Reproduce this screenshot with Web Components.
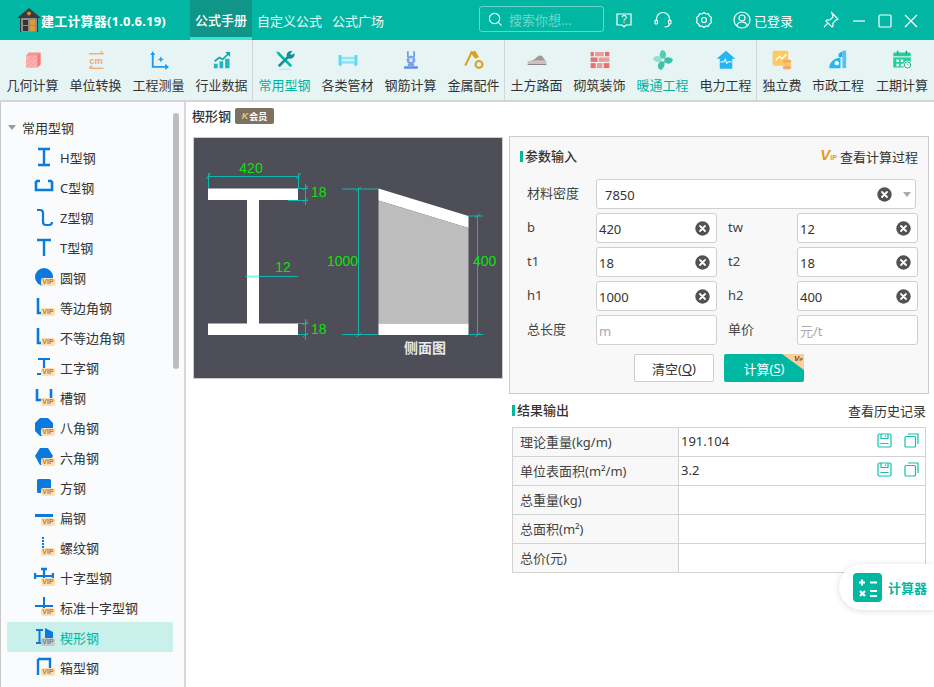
<!DOCTYPE html>
<html lang="zh">
<head>
<meta charset="utf-8">
<title>建工计算器</title>
<style>
html, body { margin: 0; height: 687px; overflow: hidden; background: #fff; }
body { font: 13px "Noto Sans", "Noto Sans CJK SC", sans-serif; color: #333; }
</style>
</head>
<body>
<calc-app></calc-app>
<script>
const FONT = '"Noto Sans", "Noto Sans CJK SC", sans-serif';

// toolbar icons, 32x32
const TOOL_ICONS = {
  cube: '<path d="M5 9l4-5h19v19l-5 5H5z" fill="#ff8f8f"/><path d="M5 9h18v19H5z" fill="#ffb0b0"/><path d="M6 27L22 11M12 28l11-11M6 20l10-10" stroke="#ff7c7c" stroke-width="1"/><path d="M23 9l5-5v19l-5 5z" fill="#f97a7a"/>',
  unit: '<path d="M5 6h23M23 2l5 4M5 29h23M5 29l5-4" stroke="#f5b07a" stroke-width="2.400" fill="none"/><text x="16" y="23" text-anchor="middle" font-size="15" font-weight="700" fill="#f5a968" font-family="Liberation Sans">cm</text>',
  axis: '<path d="M6 5v22h23" stroke="#1e9bf0" stroke-width="3" fill="none"/><path d="M2 8l4-6 4 6zM26 22l6 5-6 5z" fill="#1e9bf0"/><path d="M19 10l1.500 3.500 3.500 1.500-3.500 1.500-1.500 3.500-1.500-3.500-3.500-1.500 3.500-1.500z" fill="#1e9bf0"/>',
  chart: '<path d="M4 18l8-6 5 3 9-9" stroke="#10a8a0" stroke-width="2.600" fill="none"/><path d="M21 3h8v8z" fill="#10a8a0"/><path d="M3 22h6v7H3zM12 18h6v11h-6zM21 14h7v15h-7z" fill="#1fb5c4"/>',
  wrench: '<path d="M6 6l20 20" stroke="#00b8a2" stroke-width="4"/><path d="M25 7L6 26" stroke="#0f8f96" stroke-width="4"/><path d="M19 11a7 7 0 0 1 9-9l-4 4 2 2 5-3a7 7 0 0 1-10 8z" fill="#0f8f96"/><path d="M2 2l6 2-3 4z" fill="#00b8a2"/><ellipse cx="16" cy="31" rx="10" ry="1.500" fill="#bdeee7"/>',
  pipe: '<rect x="1" y="8" width="5" height="17" rx="1" fill="#5fd7f2"/><rect x="26" y="8" width="5" height="17" rx="1" fill="#5fd7f2"/><rect x="6" y="11" width="20" height="11" fill="#8ae6f7"/><rect x="6" y="15" width="20" height="2.500" fill="#d8f8fd"/>',
  rebar: '<path d="M11 2v9M21 2v9" stroke="#5c8ee6" stroke-width="2.400"/><circle cx="16" cy="16" r="7" fill="#7aa3ee"/><path d="M13.500 13h5v6h-5z" fill="#dfe9fb"/><path d="M5 26h22v4H5z" fill="#5c8ee6"/><path d="M11 22h10v4H11z" fill="#7aa3ee"/>',
  metal: '<path d="M13 2L2 25" stroke="#d8a31f" stroke-width="3.400"/><path d="M10 4l8-3 6 10-6 3z" fill="#d8a31f"/><circle cx="24" cy="23" r="5.500" fill="none" stroke="#d8a31f" stroke-width="3.400"/>',
  road: '<path d="M2 17c6 0 8-1 11-3 3-3 6-6 10-5 3 1 4 7 8 8z" fill="#a89797"/><rect x="1" y="18" width="30" height="3.500" fill="#ccbcbc"/><rect x="1" y="22" width="30" height="2" fill="#8f8484"/>',
  brick: '<g fill="#ea6f6f"><rect x="8" y="3" width="14" height="7" rx="1" fill="#f09a9a"/><rect x="24" y="3" width="7" height="7"/><rect x="1" y="3" width="5" height="7"/><rect x="1" y="12" width="11" height="7"/><rect x="14" y="12" width="17" height="7" fill="#f09a9a"/><rect x="1" y="21" width="8" height="8"/><rect x="11" y="21" width="9" height="8" fill="#f09a9a"/><rect x="22" y="21" width="9" height="8"/></g>',
  fan: '<path d="M14 15C9 10 10 3 15 0c6 1 8 9 3 14z" fill="#4fcdb5"/><path d="M18 14c5-4 11-3 14 2-2 7-10 8-15 2z" fill="#3fc1ab"/><path d="M18 18c2 6-1 12-6 14-6-3-6-11 2-15z" fill="#3fc1ab"/><path d="M14 18C9 21 3 19 0 14c3-6 11-6 15 0z" fill="#8fe0cd"/><circle cx="16" cy="16" r="2.400" fill="#fff"/>',
  house: '<path d="M16 1L1 14h5v15a1 1 0 0 0 1 1h18a1 1 0 0 0 1-1V14h5z" fill="#25b6f4"/><path d="M7 19h6l2-5 2 8 2-3h6" fill="none" stroke="#fff" stroke-width="1.600"/>',
  fee: '<rect x="1" y="1" width="25" height="24" rx="3" fill="#ffc95e"/><path d="M6 16l6-6 4 4 7-7" stroke="#fff" stroke-width="2.400" fill="none"/><ellipse cx="24" cy="18" rx="7" ry="3" fill="#f7ab5a"/><ellipse cx="24" cy="23" rx="7" ry="3" fill="#f9c47f"/><ellipse cx="24" cy="28" rx="7" ry="3" fill="#f7ab5a"/>',
  muni: '<path d="M23 1h6v28h-6z" fill="#55c2f7"/><path d="M17 6l6-4v9h-6z" fill="#25a8f0"/><path d="M2 29c0-8 6-16 18-17v17z" fill="#25b6f4"/><circle cx="14" cy="21" r="3.500" fill="#fff"/>',
  date: '<path d="M4 4h24a2 2 0 0 1 2 2v22H2V6a2 2 0 0 1 2-2z" fill="#21cf9c"/><path d="M9 1v6M23 1v6" stroke="#16ad80" stroke-width="2.400"/><path d="M2 11h28" stroke="#fff" stroke-width="1.600"/><path d="M7 15h4v4H7zM14 15h4v4h-4zM7 22h4v4H7zM14 22h4v4h-4z" fill="#fff"/><circle cx="25" cy="24" r="7" fill="#fff"/><circle cx="25" cy="24" r="5" fill="none" stroke="#16ad80" stroke-width="1.600"/><path d="M25 21v3h2.500" stroke="#16ad80" fill="none"/>'
};

// tree icons, 20x20, all in one blue
const TREE_ICONS = {
  h: '<path d="M4 2h12M10 2v16M4 18h12" stroke="#0a7ade" stroke-width="2.400" fill="none"/>',
  c: '<path d="M2 4v9h16V4" stroke="#0a7ade" stroke-width="2.600" fill="none"/><path d="M2 4h4M14 4h4" stroke="#0a7ade" stroke-width="2.600"/>',
  z: '<path d="M3 3h3c2 0 3 1 3 3v9c0 2 1 3 3 3h3c2 0 3-1 3-3" stroke="#0a7ade" stroke-width="2.200" fill="none"/>',
  t: '<path d="M3 3h14M10 3v16" stroke="#0a7ade" stroke-width="2.400" fill="none"/>',
  round: '<circle cx="10" cy="10" r="9" fill="#0a7ade"/>',
  eq: '<path d="M4 1v15h6" stroke="#0a7ade" stroke-width="2.600" fill="none"/>',
  i: '<path d="M4 2h12M10 2v14M3 17h4" stroke="#0a7ade" stroke-width="2.200" fill="none"/>',
  slot: '<path d="M3 2v11h14V2" stroke="#0a7ade" stroke-width="2.600" fill="none"/>',
  oct: '<path d="M6 1h8l5 5v8l-5 5H6l-5-5V6z" fill="#0a7ade"/>',
  hex: '<path d="M6 1h8l5 8-5 9H6l-5-9z" fill="#0a7ade"/>',
  sq: '<rect x="3" y="2" width="14" height="14" rx="1.500" fill="#0a7ade"/>',
  flat: '<rect x="1" y="7" width="18" height="3" fill="#0a7ade"/>',
  rib: '<path d="M9 0v16" stroke="#0a7ade" stroke-width="2" stroke-dasharray="2 1"/>',
  cross: '<path d="M10 2v16M1 9h18" stroke="#0a7ade" stroke-width="2.200"/><path d="M7 2h6M1 6v6M19 6v6" stroke="#0a7ade" stroke-width="2.400"/>',
  scross: '<path d="M10 0v18M1 9h18" stroke="#0a7ade" stroke-width="2"/>',
  wedge: '<path d="M2 3h7M5.500 3v13M2 16h7" stroke="#0a7ade" stroke-width="2" fill="none"/><path d="M11 1l8 4v12h-8z" fill="#0a7ade"/>',
  box: '<path d="M4 2h12v15M4 2v16" stroke="#0a7ade" stroke-width="2.400" fill="none"/>'
};

class ToolItem extends HTMLElement {
  constructor() {
    super();
    this.attachShadow({ mode: 'open' });
  }
  connectedCallback() {
    const on = this.hasAttribute('active');
    this.shadowRoot.innerHTML = `
      <style>
        :host { display: flex; flex-direction: column; align-items: center; width: 63px; flex: none; }
        svg { width: 20px; height: 20px; margin-top: 10px; }
        span { margin-top: 6px; font-size: 13px; line-height: 18px; white-space: nowrap; color: ${on ? '#00b19c' : '#333'}; }
      </style>
      <svg viewBox="0 0 32 32">${TOOL_ICONS[this.getAttribute('icon')]}</svg>
      <span><slot></slot></span>`;
  }
}

class TitleBar extends HTMLElement {
  constructor() {
    super();
    this.attachShadow({ mode: 'open' });
  }
  connectedCallback() {
    this.shadowRoot.innerHTML = `
      <style>
        :host { display: flex; align-items: stretch; height: 40px; background: #01b7a3; color: #fff; font-size: 13px; }
        .logo { display: flex; align-items: center; width: 190px; padding-left: 17px; box-sizing: border-box; }
        .logo svg { width: 24px; height: 26px; flex: none; }
        .logo b { font-size: 13px; white-space: nowrap; letter-spacing: .2px; }
        .tab { display: flex; align-items: center; color: #e6faf7; box-sizing: border-box; white-space: nowrap; }
        .tab.on { justify-content: center; background: #0f9688; border-bottom: 3px solid #2fe8d3; width: 62px; color: #fff; font-weight: 500; padding-top: 2px; }
        .tab.two { padding: 0 5px; }
        .tab.three { padding: 0 5px; }
        .search { display: flex; align-items: center; gap: 6px; width: 125px; height: 26px; margin: 6px 0 0 90px; box-sizing: border-box; border: 1px solid rgba(255,255,255,.4); border-radius: 3px; padding-left: 8px; color: rgba(255,255,255,.45); }
        .ico { display: flex; align-items: center; justify-content: center; }
        svg.i { width: 18px; height: 18px; fill: none; stroke: #fff; stroke-width: 1.200; }
        .user { display: flex; align-items: center; gap: 3px; white-space: nowrap; }
        .btns { display: flex; align-items: center; }
      </style>
      <div class="logo">
        <svg viewBox="0 0 24 26"><path d="M12 1L0 11h3v14h18V11h3z" fill="#3a3a3a"/><rect x="4" y="11" width="16" height="14" rx="1" fill="#8d8d8d"/><rect x="6" y="13" width="5" height="5" fill="#333"/><rect x="13" y="13" width="5" height="5" fill="#e09a3b"/><rect x="6" y="19" width="5" height="5" fill="#333"/><rect x="13" y="19" width="5" height="5" fill="#e09a3b"/><circle cx="12" cy="6.500" r="2" fill="#c98f2f"/></svg>
        <b>建工计算器(1.0.6.19)</b>
      </div>
      <div class="tab on">公式手册</div>
      <div class="tab two">自定义公式</div>
      <div class="tab three">公式广场</div>
      <div class="search">
        <svg class="i" style="width:15px;height:15px" viewBox="0 0 16 16"><circle cx="7" cy="7" r="5.500"/><path d="M11 11l3.500 3.500"/></svg>
        <span>搜索你想...</span>
      </div>
      <div class="ico" style="margin-left:11px">
        <svg class="i" viewBox="0 0 18 18"><path d="M2 3h14v11h-5l-2 2-2-2H2z"/><text x="9" y="12" text-anchor="middle" font-size="10" fill="#fff" stroke="none" font-family="Liberation Sans">?</text></svg>
      </div>
      <div class="ico" style="margin-left:21px">
        <svg class="i" viewBox="0 0 18 18"><path d="M2.500 10V8a6.500 6.500 0 0 1 13 0v2"/><rect x="1" y="9" width="2.500" height="4" rx="1"/><rect x="14.500" y="9" width="2.500" height="4" rx="1"/><path d="M15.500 13c0 2-2 3-5 3"/></svg>
      </div>
      <div class="ico" style="margin-left:23px">
        <svg class="i" viewBox="0 0 18 18"><path d="M9 1.500l2 1.500 2.500-.2 1 2.300 2 1.500-.7 2.400.7 2.400-2 1.500-1 2.300-2.500-.2-2 1.500-2-1.500-2.500.2-1-2.300-2-1.500.7-2.400-.7-2.400 2-1.500 1-2.300 2.500.2z"/><circle cx="9" cy="9" r="2.500"/></svg>
      </div>
      <div class="user" style="margin-left:20px">
        <svg class="i" viewBox="0 0 18 18"><circle cx="9" cy="9" r="8"/><circle cx="9" cy="7" r="3"/><path d="M3.500 15c1-3 3-4 5.500-4s4.500 1 5.500 4"/></svg>
        <span>已登录</span>
      </div>
      <div class="btns" style="margin-left:29px">
        <svg class="i" viewBox="0 0 18 18"><path d="M10 2l6 6-2 1-3 3v3l-1 1-6-6 1-1h3l3-3zM6 12l-4 4"/></svg>
        <svg class="i" style="margin-left:10px" viewBox="0 0 18 18"><path d="M3 10h12"/></svg>
        <svg class="i" style="margin-left:8px" viewBox="0 0 18 18"><rect x="3" y="4" width="12" height="12" rx="1"/></svg>
        <svg class="i" style="margin-left:8px" viewBox="0 0 18 18"><path d="M3 4l12 12M15 4L3 16"/></svg>
      </div>`;
  }
}

class ToolBar extends HTMLElement {
  constructor() {
    super();
    this.attachShadow({ mode: 'open' });
  }
  connectedCallback() {
    this.shadowRoot.innerHTML = `
      <style>
        :host { display: flex; height: 62px; box-sizing: border-box; background: #e6f5f4; border-bottom: 2px solid #d2d6d6; padding-left: 1px; }
        .group { display: flex; border-right: 1px solid #d2d6d6; box-sizing: border-box; height: 60px; }
        .group:last-child { border-right: 0; }
        .last tool-item { width: 62px; }
        .last tool-item:first-child { width: 50px; }
        .last tool-item:last-child { margin-left: 2px; }
      </style>
      <div class="group" style="width:252px">
        <tool-item icon="cube">几何计算</tool-item><tool-item icon="unit">单位转换</tool-item><tool-item icon="axis">工程测量</tool-item><tool-item icon="chart">行业数据</tool-item>
      </div>
      <div class="group" style="width:252px">
        <tool-item icon="wrench" active>常用型钢</tool-item><tool-item icon="pipe">各类管材</tool-item><tool-item icon="rebar">钢筋计算</tool-item><tool-item icon="metal">金属配件</tool-item>
      </div>
      <div class="group" style="width:252px">
        <tool-item icon="road">土方路面</tool-item><tool-item icon="brick">砌筑装饰</tool-item><tool-item icon="fan" active>暖通工程</tool-item><tool-item icon="house">电力工程</tool-item>
      </div>
      <div class="group last" style="width:177px">
        <tool-item icon="fee">独立费</tool-item><tool-item icon="muni">市政工程</tool-item><tool-item icon="date">工期计算</tool-item>
      </div>`;
  }
}

class TreeRow extends HTMLElement {
  constructor() {
    super();
    this.attachShadow({ mode: 'open' });
  }
  connectedCallback() {
    const on = this.hasAttribute('selected');
    const vip = this.hasAttribute('vip');
    this.shadowRoot.innerHTML = `
      <style>
        :host { display: flex; align-items: center; height: 30px; padding-left: 27px; border-radius: 2px; background: ${on ? '#c9f0eb' : 'transparent'}; }
        .icon { position: relative; width: 20px; height: 20px; flex: none; }
        svg { display: block; width: 20px; height: 20px; }
        .vip { position: absolute; left: 7px; top: 11px; width: 14px; height: 8px; border-radius: 2px; background: ${on ? '#c3cbc9' : '#ffdfb0'}; color: ${on ? '#7b7f7e' : '#bd7a22'}; font: 700 7px/8px "Liberation Sans", sans-serif; text-align: center; }
        span { margin-left: 6px; color: ${on ? '#00b8a2' : '#333'}; white-space: nowrap; font-size: 13px; }
      </style>
      <div class="icon"><svg viewBox="0 0 20 20">${TREE_ICONS[this.getAttribute('icon')]}</svg>${vip ? '<div class="vip">VIP</div>' : ''}</div>
      <span><slot></slot></span>`;
  }
}

class SideTree extends HTMLElement {
  constructor() {
    super();
    this.attachShadow({ mode: 'open' });
  }
  connectedCallback() {
    const rows = [
      ['h', '', 'H型钢'], ['c', '', 'C型钢'], ['z', '', 'Z型钢'], ['t', '', 'T型钢'],
      ['round', 'vip', '圆钢'], ['eq', 'vip', '等边角钢'], ['eq', 'vip', '不等边角钢'],
      ['i', 'vip', '工字钢'], ['slot', 'vip', '槽钢'], ['oct', 'vip', '八角钢'],
      ['hex', 'vip', '六角钢'], ['sq', 'vip', '方钢'], ['flat', 'vip', '扁钢'],
      ['rib', 'vip', '螺纹钢'], ['cross', 'vip', '十字型钢'], ['scross', 'vip', '标准十字型钢'],
      ['wedge', 'vip selected', '楔形钢'], ['box', 'vip', '箱型钢']
    ];
    this.shadowRoot.innerHTML = `
      <style>
        :host { display: flex; width: 186px; flex: none; box-sizing: border-box; height: 585px; overflow: hidden; background: #f9fbfd; border-left: 1px solid #c8c8c8; border-right: 2px solid #d8d8d8; }
        .list { width: 172px; flex: none; padding: 10px 0 0 6px; box-sizing: border-box; }
        .head { display: flex; align-items: center; height: 30px; padding-left: 1px; }
        .head i { width: 0; height: 0; border: 4px solid transparent; border-top: 5px solid #999; border-bottom: 0; margin-right: 6px; }
        .track { flex: 1; padding-top: 11px; }
        .thumb { width: 6px; height: 256px; border-radius: 3px; background: #bdbdbd; }
      </style>
      <div class="list">
        <div class="head"><i></i>常用型钢</div>
        ${rows.map(r => `<tree-row icon="${r[0]}" ${r[1]}>${r[2]}</tree-row>`).join('')}
      </div>
      <div class="track"><div class="thumb"></div></div>`;
  }
}

class WedgeFigure extends HTMLElement {
  constructor() {
    super();
    this.attachShadow({ mode: 'open' });
  }
  connectedCallback() {
    this.shadowRoot.innerHTML = `
      <style>
        :host { display: block; width: 310px; height: 242px; }
        svg { display: block; width: 310px; height: 242px; }
        text { font-family: "Liberation Sans", sans-serif; font-size: 14px; fill: #0be30b; }
        text.cap { font-family: ${FONT}; font-weight: 700; fill: #e8e8e8; }
        .l { stroke: #12b5ad; stroke-width: 1; fill: none; }
      </style>
      <svg viewBox="0 0 310 242">
        <rect x=".5" y=".5" width="309" height="241" fill="#4d4e58" stroke="#ccc"/>
        <path d="M15 51.500h90v11.500H66v123.500h39v11.500H15v-11.500h39V63H15z" fill="#fff"/>
        <path d="M185.500 51.500l90 27.500v12l-90-27.500z" fill="#fff"/>
        <path d="M185.500 63.500l90 27.500v95.500h-90z" fill="#bdbdbd"/>
        <rect x="185.500" y="186.500" width="90" height="11.500" fill="#fff"/>
        <path class="l" d="M15.500 39.500h90M15.500 36v15M105.500 36v15M13 42l5-6M103 42l5-6"/>
        <path class="l" d="M105 51.500h10M95 63.500h20M112.500 47v21M110 53l5-4M110 65l5-4"/>
        <path class="l" d="M105 186.500h10M105 197.500h10M112.500 182v21M110 188l5-4M110 200l5-4"/>
        <path class="l" d="M52 139.500h53"/>
        <path d="M54 139.500h12" stroke="#7ff6ee" stroke-width="2"/>
        <path class="l" d="M149 52h36M149 197.500h36M165.500 51v147M163 54l5-4M163 200l5-4"/>
        <path class="l" d="M275 79h15M275 197.500h15M284.500 79v119M282 81l5-4M282 200l5-4"/>
        <text x="58" y="36" text-anchor="middle">420</text>
        <text x="118" y="60">18</text>
        <text x="90" y="135" text-anchor="middle">12</text>
        <text x="118" y="197">18</text>
        <text x="134" y="129">1000</text>
        <text x="280" y="129">400</text>
        <text class="cap" x="232" y="216" text-anchor="middle">侧面图</text>
      </svg>`;
  }
}

class ClearIcon extends HTMLElement {
  constructor() {
    super();
    this.attachShadow({ mode: 'open' });
  }
  connectedCallback() {
    this.shadowRoot.innerHTML = `
      <style>
        :host { display: block; width: 15px; height: 15px; flex: none; }
        svg { display: block; width: 15px; height: 15px; }
      </style>
      <svg viewBox="0 0 15 15"><circle cx="7.500" cy="7.500" r="7.200" fill="#525252"/><path d="M5 5l5 5M10 5l-5 5" stroke="#fff" stroke-width="1.800" stroke-linecap="round"/></svg>`;
  }
}

class NumField extends HTMLElement {
  constructor() {
    super();
    this.attachShadow({ mode: 'open' });
  }
  connectedCallback() {
    const value = this.getAttribute('value');
    const hint = this.getAttribute('hint');
    this.shadowRoot.innerHTML = `
      <style>
        :host { display: flex; align-items: center; height: 30px; box-sizing: border-box; background: #fff; border: 1px solid #cfcfcf; border-radius: 3px; padding: 0 6px 0 2px; font-size: 13px; }
        span { flex: 1; padding-top: 1px; color: ${value ? '#333' : '#aaa'}; }
      </style>
      <span>${value || hint}</span>
      ${value ? '<clear-icon></clear-icon>' : ''}`;
  }
}

class ParamPanel extends HTMLElement {
  constructor() {
    super();
    this.attachShadow({ mode: 'open' });
  }
  connectedCallback() {
    this.shadowRoot.innerHTML = `
      <style>
        :host { display: block; width: 420px; height: 258px; box-sizing: border-box; background: #f8f8f8; border: 1px solid #ccc; padding: 8px 10px 0 10px; font-size: 13px; color: #333; }
        .top { display: flex; align-items: center; justify-content: space-between; height: 22px; }
        .top b { font-weight: 500; border-left: 3px solid #00b8a2; padding-left: 2px; line-height: 11px; }
        .top div { display: flex; align-items: center; gap: 3px; }
        .vip { color: #e29a1c; font: italic 700 15px/13px "Liberation Sans", sans-serif; }
        .vip small { font-size: 7px; font-style: normal; }
        .grid { display: grid; grid-template-columns: 69px 121px 80px 121px; row-gap: 4px; align-items: center; margin: 12px 0 0 7px; }
        .grid > span { color: #444; padding-bottom: 3px; }
        .grid > span.r { padding-left: 11px; }
        .sel { grid-column: 2 / 5; width: 320px; display: flex; align-items: center; height: 30px; box-sizing: border-box; background: #fff; border: 1px solid #cfcfcf; border-radius: 3px; padding: 0 4px 0 8px; }
        .sel span { flex: 1; padding-top: 1px; }
        .sel i { width: 0; height: 0; margin-left: 11px; border: 4px solid transparent; border-top: 5px solid #aaa; border-bottom: 0; }
        .acts { display: flex; justify-content: center; gap: 10px; margin-top: 9px; }
        .btn { position: relative; display: flex; align-items: center; justify-content: center; width: 80px; height: 28px; box-sizing: border-box; border-radius: 2px; background: #fff; border: 1px solid #cfcfcf; overflow: hidden; }
        .btn.go { background: #00b8a2; border: 0; color: #fff; }
        .btn u { text-underline-offset: 2px; }
        .corner { position: absolute; right: 0; top: 0; width: 22px; height: 16px; background: #f9cfa0; clip-path: polygon(0 0, 100% 0, 100% 100%); }
        .cv { position: absolute; right: 1px; top: 0; font: italic 700 8px/9px "Liberation Sans", sans-serif; color: #7a4a1a; }
        .cv small { font-size: 4px; font-style: normal; }
      </style>
      <div class="top">
        <b>参数输入</b>
        <div><span class="vip">V<small>IP</small></span>查看计算过程</div>
      </div>
      <div class="grid">
        <span>材料密度</span>
        <div class="sel"><span>7850</span><clear-icon></clear-icon><i></i></div>
        <span>b</span><num-field value="420"></num-field><span class="r">tw</span><num-field value="12"></num-field>
        <span>t1</span><num-field value="18"></num-field><span class="r">t2</span><num-field value="18"></num-field>
        <span>h1</span><num-field value="1000"></num-field><span class="r">h2</span><num-field value="400"></num-field>
        <span>总长度</span><num-field hint="m"></num-field><span class="r">单价</span><num-field hint="元/t"></num-field>
      </div>
      <div class="acts">
        <div class="btn">清空(<u>Q</u>)</div>
        <div class="btn go">计算(<u>S</u>)<div class="corner"></div><div class="cv">V<small>IP</small></div></div>
      </div>`;
  }
}

class ResultTable extends HTMLElement {
  constructor() {
    super();
    this.attachShadow({ mode: 'open' });
  }
  connectedCallback() {
    const tools = `
      <svg viewBox="0 0 15 15"><path d="M2.500 1h10a1.500 1.500 0 0 1 1.500 1.500v10a1.500 1.500 0 0 1-1.500 1.500h-10A1.500 1.500 0 0 1 1 12.500v-10A1.500 1.500 0 0 1 2.500 1zM4 1v4.500h7V1M8.500 2.500v1.500M3.500 10.500h8"/></svg>
      <svg viewBox="0 0 15 15"><rect x="1" y="3.500" width="10.500" height="10.500" rx="1"/><path d="M4 1h10v10"/></svg>`;
    const rows = [
      ['理论重量(kg/m)', '191.104'], ['单位表面积(m²/m)', '3.2'],
      ['总重量(kg)', ''], ['总面积(m²)', ''], ['总价(元)', '']
    ];
    this.shadowRoot.innerHTML = `
      <style>
        :host { display: block; width: 417px; font-size: 13px; color: #333; }
        .top { display: flex; align-items: center; justify-content: space-between; height: 22px; padding-right: 3px; }
        .top b { font-weight: 500; border-left: 3px solid #00b8a2; padding-left: 2px; line-height: 11px; }
        table { border-collapse: collapse; width: 414px; margin: 6px 0 0 0; table-layout: fixed; }
        td { border: 1px solid #d2d2d2; height: 29px; padding: 0 0 2px; box-sizing: border-box; }
        td:first-child { width: 166px; background: #f8f8f8; padding-left: 7px; color: #444; }
        td:last-child { padding-left: 2px; }
        .val { display: flex; align-items: center; justify-content: space-between; padding-right: 6px; }
        .val div { display: flex; gap: 12px; margin-top: -2px; }
        svg { width: 15px; height: 15px; fill: none; stroke: #12c0ad; stroke-width: 1.200; display: block; }
      </style>
      <div class="top"><b>结果输出</b><span>查看历史记录</span></div>
      <table>
        ${rows.map(r => `<tr><td>${r[0]}</td><td>${r[1] ? `<div class="val"><span>${r[1]}</span><div>${tools}</div></div>` : ''}</td></tr>`).join('')}
      </table>`;
  }
}

class CalcFloat extends HTMLElement {
  constructor() {
    super();
    this.attachShadow({ mode: 'open' });
  }
  connectedCallback() {
    this.shadowRoot.innerHTML = `
      <style>
        :host { position: absolute; right: 0; top: 564px; display: flex; align-items: center; gap: 6px; width: 95px; height: 46px; box-sizing: border-box; padding-left: 14px; background: #fff; border-radius: 23px 0 0 23px; box-shadow: 0 1px 6px rgba(0,0,0,.14); color: #00b8a2; font-size: 13px; font-weight: 700; white-space: nowrap; }
        svg { width: 29px; height: 29px; flex: none; }
      </style>
      <svg viewBox="0 0 29 29"><rect width="29" height="29" rx="4" fill="#00b8a2"/><path d="M9 6.500v6M6 9.500h6M17 9.500h7M7 18l5 5M12 18l-5 5M17 18h7M17 23h7" stroke="#fff" stroke-width="2.200"/></svg>
      计算器`;
  }
}

class CalcApp extends HTMLElement {
  constructor() {
    super();
    this.attachShadow({ mode: 'open' });
  }
  connectedCallback() {
    this.shadowRoot.innerHTML = `
      <style>
        :host { display: block; position: relative; width: 934px; height: 687px; overflow: hidden; font: 13px ${FONT}; color: #333; }
        .body { display: flex; }
        .main { flex: 1; position: relative; padding-left: 6px; }
        .crumb { display: flex; align-items: center; height: 28px; margin-bottom: 7px; gap: 4px; }
        .crumb b { font-weight: 500; padding-bottom: 2px; }
        .badge { display: flex; align-items: center; justify-content: center; gap: 1px; width: 39px; height: 16px; border-radius: 2px; background: #7d725f; color: #fff; font-size: 9px; font-weight: 700; }
        .badge em { font: italic 700 9px "Liberation Sans", sans-serif; color: #e9c987; }
        .cols { display: flex; align-items: flex-start; }
        .left { width: 317px; flex: none; padding-left: 1px; box-sizing: border-box; }
        .right { display: flex; flex-direction: column; margin-top: -1px; }
        result-table { margin: 5px 0 0 3px; }
      </style>
      <title-bar></title-bar>
      <tool-bar></tool-bar>
      <div class="body">
        <side-tree></side-tree>
        <div class="main">
          <div class="crumb"><b>楔形钢</b><div class="badge"><em>K</em>会员</div></div>
          <div class="cols">
            <div class="left"><wedge-figure></wedge-figure></div>
            <div class="right"><param-panel></param-panel><result-table></result-table></div>
          </div>
        </div>
      </div>
      <calc-float></calc-float>`;
  }
}

customElements.define('clear-icon', ClearIcon);
customElements.define('num-field', NumField);
customElements.define('tool-item', ToolItem);
customElements.define('title-bar', TitleBar);
customElements.define('tool-bar', ToolBar);
customElements.define('tree-row', TreeRow);
customElements.define('side-tree', SideTree);
customElements.define('wedge-figure', WedgeFigure);
customElements.define('param-panel', ParamPanel);
customElements.define('result-table', ResultTable);
customElements.define('calc-float', CalcFloat);
customElements.define('calc-app', CalcApp);
</script>
</body>
</html>
